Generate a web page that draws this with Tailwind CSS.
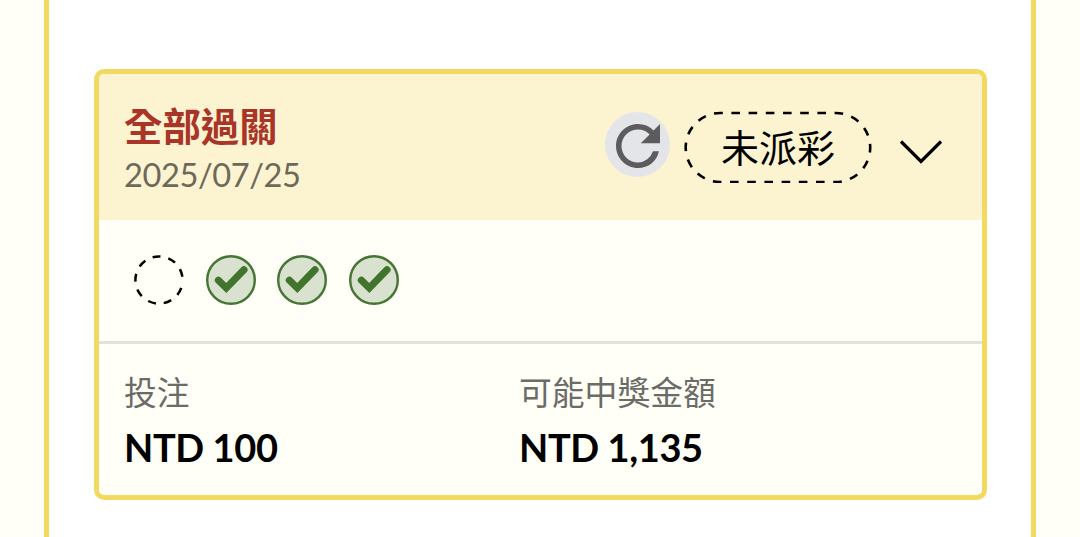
<!DOCTYPE html>
<html lang="zh-Hant">

<head>
    <meta charset="UTF-8">
    <meta name="viewport" content="width=device-width, initial-scale=1.0">
    <title>投注紀錄</title>
    <script src="https://cdn.jsdelivr.net/npm/@tailwindcss/browser@4"></script>
</head>

<body class="h-screen overflow-hidden bg-[#fffff7] pl-11 pr-[44px] font-['Lato','Noto_Sans_CJK_TC',sans-serif] text-black">
    <main class="h-full border-x-[5px] border-[#f2da61] bg-white pl-[45px] pr-[44px] pt-[69px]">
        <section class="h-[431px] overflow-hidden rounded-[10px] border-[5px] border-[#f2da61] bg-[#fffff7]">
            <!-- header -->
            <div class="flex h-[146px] items-center bg-[#fcf3d0] pl-[25px] pr-[38px]">
                <div class="flex-1 pt-[6px]">
                    <p class="text-[38.4px] leading-[48px] font-bold text-[#a93529]">全部過關</p>
                    <p class="text-[32.6px] leading-[49px] tracking-[-0.4px] text-[#6d695a]">2025/07/25</p>
                </div>
                <button class="mr-[14px] mb-[5px] flex size-[65px] items-center justify-center rounded-full bg-[#e4e5e8]">
                    <svg class="mt-[2px] size-[66px] shrink-0" viewBox="0 0 24 24" fill="#5c5c5e">
                        <path d="M17.65 6.35A7.96 7.96 0 0 0 12 4c-4.42 0-7.99 3.58-7.99 8s3.57 8 7.99 8c3.73 0 6.84-2.4 7.6-6.1h-2.15A5.99 5.99 0 0 1 12 18c-3.31 0-6-2.69-6-6s2.69-6 6-6c1.66 0 3.14.69 4.22 1.78L13 11h7V4z" />
                    </svg>
                </button>
                <div class="relative mr-[26px] flex h-[72px] w-[188px] items-center justify-center">
                    <svg class="absolute inset-0" width="188" height="72" viewBox="0 0 188 72" fill="none">
                        <rect x="1.7" y="2" width="184.5" height="69" rx="34.5" stroke="#000" stroke-width="2.6" stroke-dasharray="8.6 8.6" stroke-dashoffset="6" />
                    </svg>
                    <span class="text-[38px] leading-[48px]">未派彩</span>
                </div>
                <svg class="mt-[9px]" width="46" height="28" viewBox="0 0 46 28" fill="none">
                    <path d="M3 3.5L23 23.5L43 3.5" stroke="#000" stroke-width="3.2" />
                </svg>
            </div>

            <!-- legs -->
            <div class="flex h-[124px] items-center gap-[21.5px] border-b-[3px] border-[#e2e2dc] pl-[35px] pb-[1px]">
                <svg width="50" height="50" viewBox="0 0 50 50" fill="none">
                    <circle cx="25" cy="25" r="23.6" stroke="#000" stroke-width="2.5" stroke-dasharray="8 8" stroke-dashoffset="-8" />
                </svg>
                <svg width="50" height="50" viewBox="0 0 50 50" fill="none">
                    <circle cx="25" cy="25" r="23.8" fill="#d9e1cf" stroke="#457434" stroke-width="2.4" />
                    <path d="M12.4 25.2L20.3 33L38 14.8" stroke="#43742e" stroke-width="7.2" stroke-linecap="round" />
                </svg>
                <svg width="50" height="50" viewBox="0 0 50 50" fill="none">
                    <circle cx="25" cy="25" r="23.8" fill="#d9e1cf" stroke="#457434" stroke-width="2.4" />
                    <path d="M12.4 25.2L20.3 33L38 14.8" stroke="#43742e" stroke-width="7.2" stroke-linecap="round" />
                </svg>
                <svg width="50" height="50" viewBox="0 0 50 50" fill="none">
                    <circle cx="25" cy="25" r="23.8" fill="#d9e1cf" stroke="#457434" stroke-width="2.4" />
                    <path d="M12.4 25.2L20.3 33L38 14.8" stroke="#43742e" stroke-width="7.2" stroke-linecap="round" />
                </svg>
            </div>

            <!-- amounts -->
            <div class="flex pl-[25px] pt-[24px]">
                <div class="w-[395px]">
                    <p class="text-[32.8px] leading-[50px] text-[#6b6b68]">投注</p>
                    <p class="mt-[4px] text-[38px] leading-[50px] font-bold tracking-[-0.4px]">NTD 100</p>
                </div>
                <div>
                    <p class="text-[32.8px] leading-[50px] text-[#6b6b68]">可能中獎金額</p>
                    <p class="mt-[4px] text-[38px] leading-[50px] font-bold tracking-[-0.4px]">NTD 1,135</p>
                </div>
            </div>
        </section>
    </main>
</body>

</html>
